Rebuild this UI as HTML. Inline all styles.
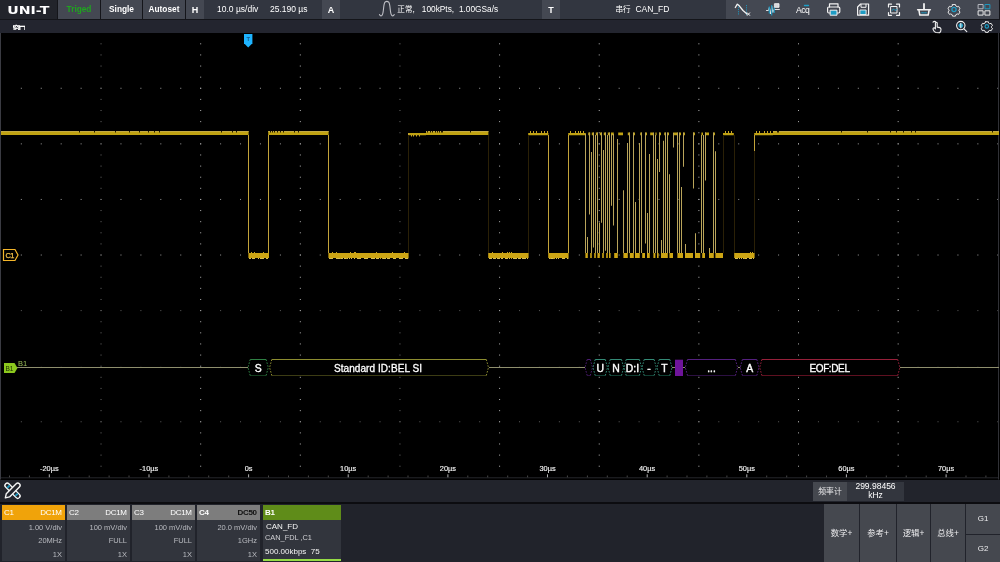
<!DOCTYPE html>
<html lang="zh">
<head>
<meta charset="utf-8">
<title>UNI-T Oscilloscope - CAN_FD decode</title>
<style>
*{box-sizing:border-box;margin:0;padding:0}
html,body{width:1000px;height:562px;overflow:hidden;background:#000}
body{font-family:"Liberation Sans","Noto Sans CJK SC",sans-serif;color:#fff;font-size:8.5px;position:relative}
.abs{position:absolute}
body>*{will-change:transform}
#top{left:0;top:0;width:1000px;height:20px;background:#14151a}
#top .b{position:absolute;top:0;height:18.8px;background:#444852;text-align:center;line-height:18.4px;font-weight:bold;font-size:8.3px;white-space:nowrap}
#top .f{position:absolute;top:0;height:18.8px;background:#323640;line-height:19.4px;font-size:8.5px;white-space:nowrap}
#logo{position:absolute;left:0;top:0;width:57px;height:18.8px;background:#22242b}
#bar2{left:0;top:19.8px;width:1000px;height:13.2px;background:#23252f}
#plot{left:0;top:0;width:1000px;height:562px}
#pan{left:0;top:479.5px;width:1000px;height:22.5px;background:#22242c}
#bot{left:0;top:502px;width:1000px;height:60px;background:#21232b;border-top:2.5px solid #0c0c10}
.ch{position:absolute;top:505px;width:63px;height:56px;background:#32353d}
.ch .h{position:absolute;left:0;top:0;width:100%;height:15px;font-size:8px;line-height:15.4px;color:#fff;letter-spacing:-.35px}
.ch .h span{position:absolute;right:3.4px;top:0}
.ch .h b{position:absolute;left:2px;top:0;font-weight:normal}
.ch .r{position:absolute;right:3px;font-size:7.5px;color:#b9bbc0;line-height:10px;white-space:nowrap}
.btn{position:absolute;background:#45484f;color:#ececee;font-size:8.4px;text-align:center;white-space:nowrap}
svg text{font-family:"Liberation Sans","Noto Sans CJK SC",sans-serif}
</style>
</head>
<body>
<svg id="plot" class="abs" width="1000" height="562" viewBox="0 0 1000 562"><rect x="0" y="33" width="1000" height="446.5" fill="#000"/><rect x="0" y="33" width="1" height="446.500" fill="#3a3b42"/><rect x="998" y="33" width="1" height="446.500" fill="#303136"/><rect x="1" y="477.300" width="997" height="1" fill="#26272c"/><g stroke="#9c9c9c" stroke-width="1" fill="none"><line x1="20.83" y1="88.28" x2="998" y2="88.28" stroke-dasharray="1 18.928"/><line x1="20.83" y1="143.86" x2="998" y2="143.86" stroke-dasharray="1 18.928"/><line x1="20.83" y1="199.44" x2="998" y2="199.44" stroke-dasharray="1 18.928"/><line x1="20.83" y1="255.02" x2="998" y2="255.02" stroke-dasharray="1 18.928"/><line x1="20.83" y1="310.60" x2="998" y2="310.60" stroke-dasharray="1 18.928" stroke="#5c5c5c"/><line x1="20.83" y1="367.40" x2="998" y2="367.40" stroke-dasharray="1 18.928"/><line x1="20.83" y1="421.76" x2="998" y2="421.76" stroke-dasharray="1 18.928" stroke="#5c5c5c"/><line x1="101.04" y1="43.32" x2="101.04" y2="476" stroke-dasharray="1 10.116" stroke="#6a6a6a"/><line x1="200.68" y1="43.32" x2="200.68" y2="476" stroke-dasharray="1 10.116" stroke="#b4b4b4"/><line x1="300.32" y1="43.32" x2="300.32" y2="476" stroke-dasharray="1 10.116" stroke="#b4b4b4"/><line x1="399.96" y1="43.32" x2="399.96" y2="476" stroke-dasharray="1 10.116" stroke="#6a6a6a"/><line x1="499.60" y1="43.32" x2="499.60" y2="476" stroke-dasharray="1 10.116" stroke="#b4b4b4"/><line x1="599.24" y1="43.32" x2="599.24" y2="476" stroke-dasharray="1 10.116" stroke="#b4b4b4"/><line x1="698.88" y1="43.32" x2="698.88" y2="476" stroke-dasharray="1 10.116" stroke="#b4b4b4"/><line x1="798.52" y1="43.32" x2="798.52" y2="476" stroke-dasharray="1 10.116" stroke="#b4b4b4"/><line x1="898.16" y1="43.32" x2="898.16" y2="476" stroke-dasharray="1 10.116" stroke="#b4b4b4"/></g><g fill="#474747"><rect x="9.0" y="475.5" width="1" height="1.8"/><rect x="28.9" y="475.5" width="1" height="1.8"/><rect x="48.8" y="474.3" width="1" height="3" fill="#b0b0b0"/><rect x="68.7" y="475.5" width="1" height="1.8"/><rect x="88.7" y="475.5" width="1" height="1.8"/><rect x="108.6" y="475.5" width="1" height="1.8"/><rect x="128.5" y="475.5" width="1" height="1.8"/><rect x="148.5" y="474.3" width="1" height="3" fill="#b0b0b0"/><rect x="168.4" y="475.5" width="1" height="1.8"/><rect x="188.3" y="475.5" width="1" height="1.8"/><rect x="208.2" y="475.5" width="1" height="1.8"/><rect x="228.2" y="475.5" width="1" height="1.8"/><rect x="248.1" y="474.3" width="1" height="3" fill="#b0b0b0"/><rect x="268.0" y="475.5" width="1" height="1.8"/><rect x="288.0" y="475.5" width="1" height="1.8"/><rect x="307.9" y="475.5" width="1" height="1.8"/><rect x="327.8" y="475.5" width="1" height="1.8"/><rect x="347.7" y="474.3" width="1" height="3" fill="#b0b0b0"/><rect x="367.7" y="475.5" width="1" height="1.8"/><rect x="387.6" y="475.5" width="1" height="1.8"/><rect x="407.5" y="475.5" width="1" height="1.8"/><rect x="427.5" y="475.5" width="1" height="1.8"/><rect x="447.4" y="474.3" width="1" height="3" fill="#b0b0b0"/><rect x="467.3" y="475.5" width="1" height="1.8"/><rect x="487.2" y="475.5" width="1" height="1.8"/><rect x="507.2" y="475.5" width="1" height="1.8"/><rect x="527.1" y="475.5" width="1" height="1.8"/><rect x="547.0" y="474.3" width="1" height="3" fill="#b0b0b0"/><rect x="566.9" y="475.5" width="1" height="1.8"/><rect x="586.9" y="475.5" width="1" height="1.8"/><rect x="606.8" y="475.5" width="1" height="1.8"/><rect x="626.7" y="475.5" width="1" height="1.8"/><rect x="646.7" y="474.3" width="1" height="3" fill="#b0b0b0"/><rect x="666.6" y="475.5" width="1" height="1.8"/><rect x="686.5" y="475.5" width="1" height="1.8"/><rect x="706.4" y="475.5" width="1" height="1.8"/><rect x="726.4" y="475.5" width="1" height="1.8"/><rect x="746.3" y="474.3" width="1" height="3" fill="#b0b0b0"/><rect x="766.2" y="475.5" width="1" height="1.8"/><rect x="786.2" y="475.5" width="1" height="1.8"/><rect x="806.1" y="475.5" width="1" height="1.8"/><rect x="826.0" y="475.5" width="1" height="1.8"/><rect x="845.9" y="474.3" width="1" height="3" fill="#b0b0b0"/><rect x="865.9" y="475.5" width="1" height="1.8"/><rect x="885.8" y="475.5" width="1" height="1.8"/><rect x="905.7" y="475.5" width="1" height="1.8"/><rect x="925.7" y="475.5" width="1" height="1.8"/><rect x="945.6" y="474.3" width="1" height="3" fill="#b0b0b0"/><rect x="965.5" y="475.5" width="1" height="1.8"/><rect x="985.4" y="475.5" width="1" height="1.8"/></g><g font-size="7.4" fill="#f2f2f2" stroke="#f2f2f2" stroke-width=".15" text-anchor="middle"><text x="49.3" y="471.300">-20µs</text><text x="148.9" y="471.300">-10µs</text><text x="248.6" y="471.300">0s</text><text x="348.2" y="471.300">10µs</text><text x="447.9" y="471.300">20µs</text><text x="547.5" y="471.300">30µs</text><text x="647.1" y="471.300">40µs</text><text x="746.8" y="471.300">50µs</text><text x="846.4" y="471.300">60µs</text><text x="946.1" y="471.300">70µs</text></g><path fill="#c0a212" d="M1 131h247.6v4h-247.6zM268.2 131h60.4v4h-60.4zM426 131h62.4v4h-62.4zM773 131h226v4h-226zM408.2 133h17.8v2.2h-17.8zM528.2 133h20.2v2.2h-20.2zM568.2 133h17.6v2.2h-17.6zM754.2 133h18.8v2.2h-18.8zM723 133h10.8v2.2h-10.8zM588.2 132.6h2v2.6h-2zM591.8 132.6h2v2.6h-2zM595.8 132.6h2v2.6h-2zM599.8 132.6h2v2.6h-2zM603.8 132.6h2v2.6h-2zM607.8 132.6h2v2.6h-2zM611 132.6h2.8v2.6h-2.8zM618.2 132.6h4.8v2.6h-4.8zM627.8 132.6h2v2.6h-2zM633.4 132.6h1.6v2.6h-1.6zM640.2 132.6h1.6v2.6h-1.6zM645.4 132.6h1.6v2.6h-1.6zM650.2 132.6h3.2v2.6h-3.2zM655.4 132.6h1.2v2.6h-1.2zM659 132.6h2v2.6h-2zM664.2 132.6h1.6v2.6h-1.6zM667.4 132.6h1.6v2.6h-1.6zM673 132.6h4.8v2.6h-4.8zM679.4 132.6h1.6v2.6h-1.6zM683.4 132.6h1.6v2.6h-1.6zM693 132.6h2v2.6h-2zM701.4 132.6h1.6v2.6h-1.6zM705 132.6h4v2.6h-4zM713.4 132.6h1.6v2.6h-1.6z"/><path fill="#c4aa44" d="M1 131h247.6v1h-247.6zM268.2 131h60.4v1h-60.4zM426 131h62.4v1h-62.4zM773 131h226v1h-226z"/><path fill="#cda514" d="M248.4 253h20.6v5h-20.6zM328.4 253h80.2v5h-80.2zM488.2 253h40.4v5h-40.4zM548.2 253h20.4v5h-20.4zM585.4 253h2.4v5h-2.4zM590.2 253h1.6v5h-1.6zM594.2 253h1.6v5h-1.6zM597.4 253h2.4v5h-2.4zM602.2 253h1.6v5h-1.6zM606.2 253h1.6v5h-1.6zM609 253h1.6v5h-1.6zM614.2 253h3.6v5h-3.6zM623.4 253h4.4v5h-4.4zM629.8 253h4v5h-4zM635 253h4.8v5h-4.8zM642.2 253h2.8v5h-2.8zM647 253h2.8v5h-2.8zM653.4 253h2v5h-2zM657 253h1.6v5h-1.6zM661 253h6.8v5h-6.8zM669.4 253h3.6v5h-3.6zM677.4 253h5.6v5h-5.6zM685 253h8v5h-8zM695 253h5.2v5h-5.2zM702.2 253h2.8v5h-2.8zM709 253h4.8v5h-4.8zM715.4 253h7.6v5h-7.6zM734.2 253h20.4v5h-20.4z"/><path fill="#d9c054" d="M249 258h2v1h-2zM252 258h3v1h-3zM258 258h1v1h-1zM260 258h4v1h-4zM266 258h2v1h-2zM329 258h4v1h-4zM336 258h4v1h-4zM341 258h2v1h-2zM344 258h4v1h-4zM349 258h1v1h-1zM351 258h1v1h-1zM354 258h1v1h-1zM357 258h4v1h-4zM364 258h4v1h-4zM371 258h4v1h-4zM376 258h3v1h-3zM380 258h1v1h-1zM382 258h4v1h-4zM387 258h3v1h-3zM393 258h3v1h-3zM399 258h4v1h-4zM405 258h3.2v1h-3.2zM489 258h3v1h-3zM493 258h3v1h-3zM497 258h3v1h-3zM501 258h2v1h-2zM505 258h3v1h-3zM509 258h1v1h-1zM513 258h4v1h-4zM518 258h3v1h-3zM522 258h4v1h-4zM527 258h1v1h-1zM549 258h4v1h-4zM556 258h1v1h-1zM558 258h1v1h-1zM562 258h3v1h-3zM567 258h1.4v1h-1.4zM735 258h3v1h-3zM739 258h1v1h-1zM741 258h1v1h-1zM743 258h4v1h-4zM749 258h3v1h-3zM753 258h1v1h-1z"/><path fill="#c2a33a" d="M408 133h1v8h-1zM248 135h1v118h-1zM268 135h1v118h-1zM328 135h1v118h-1zM548 135h1v118h-1zM568 135h1v118h-1zM754 135h1v16h-1z"/><path fill="#2a2006" d="M408 135h1v118h-1zM488 135h1v118h-1zM528 135h1v118h-1zM723 135h1v118h-1zM734 135h1v118h-1zM754 151h1v102h-1z"/><path fill="#b9a45a" d="M585 134h1v119h-1zM587 237h1v16h-1zM589 132.6h1v82h-1zM591 152h1v101h-1zM593 132.6h1v115h-1zM595 135h1v118h-1zM597 132.6h1v120.4h-1zM599 222.4h1v30.6h-1zM601 132.6h1v90.2h-1zM603 150h1v103h-1zM605 132.6h1v118.2h-1zM607 135h1v118h-1zM609 132.6h1v120.4h-1zM611 134h1v71.8h-1zM613 134h1v91.6h-1zM617 139h1v114h-1zM623 190.2h1v62.8h-1zM627 143h1v110h-1zM629 132.6h1v120.4h-1zM633 132.6h1v120.4h-1zM635 202h1v51h-1zM639 143h1v110h-1zM641 132.6h1v120.4h-1zM645 132.6h1v111h-1zM647 213h1v40h-1zM649 154h1v99h-1zM653 132.6h1v120.4h-1zM655 135h1v118h-1zM657 159h1v94h-1zM659 132.6h1v39.4h-1zM661 240h1v13h-1zM663 140.8h1v112.2h-1zM665 132.6h1v120.4h-1zM667 132.6h1v120.4h-1zM669 174.2h1v78.8h-1zM673 133h1v14.6h-1zM677 132.6h1v120.4h-1zM679 132.6h1v120.4h-1zM681 187h1v66h-1zM683 132.6h1v34.2h-1zM685 244h1v9h-1zM693 132.6h1v56h-1zM695 233.2h1v19.8h-1zM701 135h1v118h-1zM703 135h1v118h-1zM705 132.6h1v48h-1zM709 248h1v5h-1zM713 132.6h1v120.4h-1zM715 151.2h1v101.8h-1z"/><path fill="#241b00" d="M79 131h1v1.5h-1zM236 131h1v1.5h-1zM221 131h1v1.5h-1zM94 131h1v1.5h-1zM115 131h1v1.5h-1zM129 131h1v1.5h-1zM159 131h1v1.5h-1zM148 131h1v1.5h-1zM139 131h1v1.5h-1zM154 131h1v1.5h-1zM232 131h1v1.5h-1zM298 131h1v1.5h-1zM294 131h1v1.5h-1zM470 131h1v1.5h-1zM441 131h1v1.5h-1zM841 131h1v1.5h-1zM992 131h1v1.5h-1zM890 131h1v1.5h-1zM896 131h1v1.5h-1zM777 131h1v1.5h-1zM867 131h1v1.5h-1zM903 131h1v1.5h-1zM778 131h1v1.5h-1zM911 131h1v1.5h-1zM915 131h1v1.5h-1zM270 131h1v1.4h-1zM272 131h1v1.4h-1zM274 131h1v1.4h-1zM277 131h1v1.4h-1zM280 131h1v1.4h-1zM283 131h1v1.4h-1zM427 131h1v1.4h-1zM430 131h1v1.4h-1zM432 131h1v1.4h-1zM435 131h1v1.4h-1zM437 131h1v1.4h-1zM439 131h1v1.4h-1zM442 131h1v1.4h-1z"/><path fill="#c9a526" d="M263 252h1v1h-1zM254 252h1v1h-1zM251 252h1v1h-1zM404 252h1v1h-1zM340 258h1v1h-1zM380 258h1v1h-1zM355 252h1v1h-1zM380 258h1v1h-1zM376 252h1v1h-1zM382 258h1v1h-1zM392 252h1v1h-1zM336 252h1v1h-1zM346 258h1v1h-1zM350 252h1v1h-1zM332 252h1v1h-1zM354 252h1v1h-1zM511 252h1v1h-1zM502 252h1v1h-1zM492 252h1v1h-1zM511 258h1v1h-1zM509 252h1v1h-1zM507 252h1v1h-1zM554 258h1v1h-1zM550 258h1v1h-1zM553 258h1v1h-1zM750 252h1v1h-1zM744 258h1v1h-1zM752 252h1v1h-1zM411 135h1v1.6h-1zM413 135h1v1.6h-1zM416 135h1v1.6h-1zM419 135h1v1.6h-1zM530 131h1v2.2h-1zM533 131h1v2.2h-1zM536 131h1v2.2h-1zM541 131h1v2.2h-1zM544 131h1v2.2h-1zM547 131h1v2.2h-1zM570 131h1v2.2h-1zM575 131h1v2.2h-1zM578 131h1v2.2h-1zM580 131h1v2.2h-1zM583 131h1v2.2h-1zM756 131h1v2.2h-1zM759 131h1v2.2h-1zM764 131h1v2.2h-1zM767 131h1v2.2h-1zM770 131h1v2.2h-1zM725 131h1v2.2h-1zM728 131h1v2.2h-1zM731 131h1v2.2h-1z"/><path d="M3.5 249.5h11.5l3 5.5l-3 5.5h-11.5z" fill="#000" stroke="#f5b62a" stroke-width="1.2"/><text x="5.400" y="257.900" font-size="7.4" fill="#f5c24a" stroke="#f5c24a" stroke-width=".25" letter-spacing="-.4">C1</text><path d="M244 34h8.400v9.200l-4.200 4.200l-4.200-4.200z" fill="#1eb4ff"/><text x="248.200" y="41" font-size="5.800" font-weight="bold" fill="#1a5a8a" text-anchor="middle">T</text><path d="M17 367.5H248M489 367.5H585M672 367.5H685M738 367.5H741M900 367.5H999" stroke="#8f8f6e" stroke-width="1" fill="none"/><path d="M4 363h10.5l3 5l-3 5h-10.5z" fill="#8cc81e"/><text x="5.5" y="371" font-size="6.5" fill="#1a2a00">B1</text><text x="18" y="366" font-size="7.5" fill="#9cbf5a">B1</text><path d="M248.0 367.5L250.2 359.5H266.1L268.3 367.5L266.1 375.5H250.2z" fill="#000"/><path d="M250.2 359.5H266.1" stroke="#2f8044" stroke-width="1"/><path d="M250.2 375.5H266.1" stroke="#143c1e" stroke-width="1"/><path d="M250.2 359.5L248.0 367.5L250.2 375.5M266.1 359.5L268.3 367.5L266.1 375.5" stroke="#2f8044" stroke-width="1" stroke-dasharray="1.6 1.4" fill="none"/><path d="M269.6 367.5L271.8 359.5H486.3L488.5 367.5L486.3 375.5H271.8z" fill="#000"/><path d="M271.8 359.5H486.3" stroke="#8c8c30" stroke-width="1"/><path d="M271.8 375.5H486.3" stroke="#3c3c14" stroke-width="1"/><path d="M271.8 359.5L269.6 367.5L271.8 375.5M486.3 359.5L488.5 367.5L486.3 375.5" stroke="#8c8c30" stroke-width="1" stroke-dasharray="1.6 1.4" fill="none"/><path d="M585.0 367.5L587.2 359.5H590.3L592.5 367.5L590.3 375.5H587.2z" fill="#000"/><path d="M587.2 359.5H590.3" stroke="#4c1c70" stroke-width="1"/><path d="M587.2 375.5H590.3" stroke="#2c1042" stroke-width="1"/><path d="M587.2 359.5L585.0 367.5L587.2 375.5M590.3 359.5L592.5 367.5L590.3 375.5" stroke="#4c1c70" stroke-width="1" stroke-dasharray="1.6 1.4" fill="none"/><path d="M593.0 367.5L595.2 359.5H605.3L607.5 367.5L605.3 375.5H595.2z" fill="#000"/><path d="M595.2 359.5H605.3" stroke="#348a76" stroke-width="1"/><path d="M595.2 375.5H605.3" stroke="#103e32" stroke-width="1"/><path d="M595.2 359.5L593.0 367.5L595.2 375.5M605.3 359.5L607.5 367.5L605.3 375.5" stroke="#348a76" stroke-width="1" stroke-dasharray="1.6 1.4" fill="none"/><path d="M608.0 367.5L610.2 359.5H621.5L623.7 367.5L621.5 375.5H610.2z" fill="#000"/><path d="M610.2 359.5H621.5" stroke="#348a76" stroke-width="1"/><path d="M610.2 375.5H621.5" stroke="#103e32" stroke-width="1"/><path d="M610.2 359.5L608.0 367.5L610.2 375.5M621.5 359.5L623.7 367.5L621.5 375.5" stroke="#348a76" stroke-width="1" stroke-dasharray="1.6 1.4" fill="none"/><path d="M624.0 367.5L626.2 359.5H639.4L641.6 367.5L639.4 375.5H626.2z" fill="#000"/><path d="M626.2 359.5H639.4" stroke="#348a76" stroke-width="1"/><path d="M626.2 375.5H639.4" stroke="#103e32" stroke-width="1"/><path d="M626.2 359.5L624.0 367.5L626.2 375.5M639.4 359.5L641.6 367.5L639.4 375.5" stroke="#348a76" stroke-width="1" stroke-dasharray="1.6 1.4" fill="none"/><path d="M642.0 367.5L644.2 359.5H654.1L656.3 367.5L654.1 375.5H644.2z" fill="#000"/><path d="M644.2 359.5H654.1" stroke="#348a76" stroke-width="1"/><path d="M644.2 375.5H654.1" stroke="#103e32" stroke-width="1"/><path d="M644.2 359.5L642.0 367.5L644.2 375.5M654.1 359.5L656.3 367.5L654.1 375.5" stroke="#348a76" stroke-width="1" stroke-dasharray="1.6 1.4" fill="none"/><path d="M657.0 367.5L659.2 359.5H669.8L672.0 367.5L669.8 375.5H659.2z" fill="#000"/><path d="M659.2 359.5H669.8" stroke="#348a76" stroke-width="1"/><path d="M659.2 375.5H669.8" stroke="#103e32" stroke-width="1"/><path d="M659.2 359.5L657.0 367.5L659.2 375.5M669.8 359.5L672.0 367.5L669.8 375.5" stroke="#348a76" stroke-width="1" stroke-dasharray="1.6 1.4" fill="none"/><rect x="675" y="359.7" width="8" height="16.3" fill="#6e149a"/><path d="M685.3 367.5L687.5 359.5H735.4L737.6 367.5L735.4 375.5H687.5z" fill="#000"/><path d="M687.5 359.5H735.4" stroke="#54207e" stroke-width="1"/><path d="M687.5 375.5H735.4" stroke="#2c1042" stroke-width="1"/><path d="M687.5 359.5L685.3 367.5L687.5 375.5M735.4 359.5L737.6 367.5L735.4 375.5" stroke="#54207e" stroke-width="1" stroke-dasharray="1.6 1.4" fill="none"/><path d="M740.2 367.5L742.4 359.5H756.8L759.0 367.5L756.8 375.5H742.4z" fill="#000"/><path d="M742.4 359.5H756.8" stroke="#54207e" stroke-width="1"/><path d="M742.4 375.5H756.8" stroke="#2c1042" stroke-width="1"/><path d="M742.4 359.5L740.2 367.5L742.4 375.5M756.8 359.5L759.0 367.5L756.8 375.5" stroke="#54207e" stroke-width="1" stroke-dasharray="1.6 1.4" fill="none"/><path d="M759.7 367.5L761.9 359.5H897.7L899.9 367.5L897.7 375.5H761.9z" fill="#000"/><path d="M761.9 359.5H897.7" stroke="#96203a" stroke-width="1"/><path d="M761.9 375.5H897.7" stroke="#5e1020" stroke-width="1"/><path d="M761.9 359.5L759.7 367.5L761.9 375.5M897.7 359.5L899.9 367.5L897.7 375.5" stroke="#96203a" stroke-width="1" stroke-dasharray="1.6 1.4" fill="none"/><g font-size="10.4" fill="#fff" text-anchor="middle" stroke="#fff" stroke-width=".4"><text x="258.2" y="371.6">S</text><text x="600.3" y="371.6">U</text><text x="616.0" y="371.6">N</text><text x="632.5" y="371.6">D:I</text><text x="649.0" y="371.6">-</text><text x="664.5" y="371.6">T</text><text x="749.6" y="371.6">A</text></g><text x="378" y="371.6" font-size="10" fill="#fff" stroke="#fff" stroke-width=".3" text-anchor="middle" textLength="88" lengthAdjust="spacing">Standard ID:BEL SI</text><text x="711.5" y="371.6" font-size="10" fill="#fff" text-anchor="middle" stroke="#fff" stroke-width=".4">...</text><text x="829.7" y="371.6" font-size="10" fill="#fff" stroke="#fff" stroke-width=".3" text-anchor="middle" textLength="40.5" lengthAdjust="spacing">EOF:DEL</text></svg>
<div id="top" class="abs">
  <div id="logo"><svg width="57" height="18" viewBox="0 0 57 18"><text x="7.3" y="14.4" font-size="10" font-weight="bold" fill="#fff" textLength="42" lengthAdjust="spacingAndGlyphs" style="font-family:'DejaVu Sans','Liberation Sans',sans-serif">UNI-T</text></svg></div>
  <div class="b" style="left:58px;width:42px;color:#1fa51f">Triged</div>
  <div class="b" style="left:101px;width:41px">Single</div>
  <div class="b" style="left:143px;width:42px">Autoset</div>
  <div class="b" style="left:186px;width:18px;font-size:9px;line-height:20.2px">H</div>
  <div class="f" style="left:204px;width:118px"><span class="abs" style="left:13px">10.0 µs/div</span><span class="abs" style="left:66px">25.190 µs</span></div>
  <div class="b" style="left:322px;width:18px;font-size:9px;line-height:20.2px">A</div>
  <div class="f" style="left:340px;width:202px"><span class="abs" style="left:57.3px"><span style="font-size:7.6px">正常</span>,</span><span class="abs" style="left:81.8px;font-size:8.3px">100kPts,</span><span class="abs" style="left:118.9px;font-size:8.3px">1.00GSa/s</span></div>
  <svg class="abs" style="left:378px;top:0" width="18" height="18" viewBox="378 0 18 18" fill="none" stroke="#bfc0c6" stroke-width="1.100" stroke-linecap="round"><path d="M379.500 14.500q1 2 2.300 1q1.200-1 1.700-6.500t1.500-6.800q1.900-1.700 3.700 0q1 1.300 1.500 6.800t1.700 6.500q1.300 1 2.300-1"/></svg>
  <div class="b" style="left:542px;width:18px;font-size:9px;line-height:20.2px">T</div>
  <div class="f" style="left:560px;width:166px"><span class="abs" style="left:55.5px"><span style="font-size:7.6px">串行</span>&nbsp; CAN_FD</span></div>
  <div class="b" style="left:726px;width:273px"></div><svg class="abs" style="left:726px;top:0" width="274" height="19" viewBox="726 0 274 19" fill="none" stroke="#f2f2f2" stroke-width="1.2" stroke-linecap="round" stroke-linejoin="round">
<g><path d="M738.500 4.500v11M746.500 5v10.500" stroke="#1e96be" stroke-dasharray="1.2 1" stroke-width=".9" stroke-linecap="butt"/><path d="M735.300 7.500l2-3.300l2 1.600l3.700 4.700l4 3.500" stroke-width="1.300"/><path d="M747.300 12.800l2.400 2.600M749.700 12.800l-2.400 2.600" stroke-width="1"/></g>
<g><path d="M766.500 10.500h2l.8-3l1.200 6.500l1.200-8l1.200 6.500l1-3h5.500" stroke-width=".9"/><path d="M769.300 6.500v7M771.700 5v10.500M774.200 7v6" stroke="#1e96be" stroke-width="1.200" stroke-linecap="butt"/><path d="M774.800 3.700h4.200v3.600h-4.200z" stroke-width=".9" fill="#d8d8dc"/></g>
<g><path d="M804.500 5.500h4" stroke="#1e9cc4" stroke-width="1.300"/></g>
<g><path d="M829.500 7v-3.200h8.500v3.200"/><rect x="827.600" y="7" width="12.200" height="6" rx="1.200"/><rect x="830.500" y="10.200" width="6.500" height="5" fill="#1e9cc4" stroke="#f2f2f2" stroke-width="1"/></g>
<g><path d="M857.600 7l3-3h8v11.200h-11z"/><path d="M861 4.300v3h5v-3" stroke-width="1"/><rect x="860.300" y="10" width="5.800" height="4.500" fill="#1e9cc4" stroke="#f2f2f2" stroke-width=".9"/></g>
<g><path d="M888.500 7v-2.800h3M896.500 4.200h3v2.800M899.500 12.500v2.800h-3M891.500 15.300h-3v-2.800"/><rect x="891" y="6.500" width="6" height="6.500" stroke-width="1"/><path d="M892 10.500l1.500-1.500l1.500 1.500l1.500-1" stroke="#1e9cc4" stroke-width="1"/></g>
<g stroke-width="1.500"><path d="M924 4v5.200" stroke-width="1.800"/><path d="M917.600 9.700h12.800"/><path d="M919 10.500l.8 4.600h8.400l.8-4.600"/><path d="M921.500 12.700h5" stroke="#1e9cc4" stroke-width="1.600" stroke-linecap="butt" stroke-dasharray="1.200 .7"/></g>
<g transform="translate(954 9.500) scale(.84) translate(-954 -9.500)"><path d="M952.300 3.600h3.400l.5 1.700l1.600.9l1.700-.5l1.700 2.900l-1.300 1.200v1.400l1.300 1.200l-1.700 2.900l-1.700-.5l-1.600.9l-.5 1.700h-3.400l-.5-1.700l-1.600-.9l-1.700.5l-1.700-2.900l1.300-1.200v-1.400l-1.300-1.200l1.700-2.900l1.700.5l1.600-.9z" stroke-width="1.100"/><circle cx="954" cy="9.500" r="2.500" stroke="#1e9cc4" stroke-width="1.500"/></g>
<g stroke-width=".95"><rect x="978.500" y="4.500" width="4.600" height="4.300" stroke="#b9bcc4"/><rect x="985.300" y="4.500" width="4.600" height="4.300" stroke="#1e9cc4"/><rect x="978.500" y="10.800" width="4.600" height="4.300"/><rect x="985.300" y="10.800" width="4.600" height="4.300"/></g>
</svg>
<div class="abs" style="left:796px;top:4.500px;font-size:8.6px;line-height:11px;letter-spacing:-.5px;color:#fff">Acq</div>
</div>
<div id="bar2" class="abs"><div class="abs" style="left:12.5px;top:3.9px;height:6.5px;overflow:hidden;font-size:7.8px;line-height:11.6px;font-weight:900;letter-spacing:-1.8px">窗口</div></div>
<svg class="abs" style="left:920px;top:19px" width="80" height="15" viewBox="920 19 80 15" fill="none" stroke="#f2f2f2" stroke-width="1.100" stroke-linecap="round" stroke-linejoin="round">
<path d="M933 22.200q1.500-1.600 3 0M936 32.500q-2-.3-2.800-2.800q-.7-2 1.200-1.800l1 1v-6q.9-1.400 1.800 0v4.200q3.800.2 3.800 2.300q0 2.300-1.500 3.300z"/>
<circle cx="960.800" cy="25.600" r="4.200"/><path d="M964 28.800l2.800 2.800"/><circle cx="960.800" cy="25.600" r="2.400" fill="#1e9cc4" stroke="none"/><path d="M960.800 23.300v4.600" stroke-width="1"/>
<g transform="translate(986.800 26.400) scale(.9) translate(-986.800 -26.400)"><path d="M985.300 21.200h3l.4 1.400l1.400.8l1.500-.4l1.500 2.500l-1.100 1v1.200l1.100 1l-1.500 2.500l-1.500-.4l-1.400.8l-.4 1.400h-3l-.4-1.400l-1.400-.8l-1.500.4l-1.500-2.500l1.100-1v-1.200l-1.100-1l1.500-2.500l1.500.4l1.400-.8z" stroke-dasharray="2.200 .8"/><circle cx="986.800" cy="26.400" r="1.900" stroke="#1e9cc4" stroke-width="1.300"/></g>
</svg>
<div id="pan" class="abs">
  <div class="btn" style="left:813px;top:1.8px;width:34px;height:19px;line-height:19px;font-size:7.8px">频率计</div>
  <div class="btn" style="left:847px;top:1.8px;width:57px;height:19px;background:#33363e;font-size:8.5px;line-height:9.4px;color:#fff">299.98456<br>kHz</div>
</div>
<div id="bot" class="abs"></div>
<svg class="abs" style="left:3px;top:481px" width="20" height="20" viewBox="3 481 20 20" fill="none" stroke="#f4f4f4" stroke-width="1.400" stroke-linejoin="round"><g transform="rotate(-45 12.500 490.700)"><rect x="10.200" y="481" width="4.600" height="19.400" rx="2.200"/><path d="M10.800 485h3.400M10.800 496.400h3.400" stroke="#1e9cc4" stroke-width="1.800"/></g><g transform="rotate(45 12.500 490.700)"><path d="M10.200 483.200q0-2.200 2.300-2.200t2.300 2.200v14l-2.300 3.600l-2.300-3.600z" fill="#22242c"/></g></svg>
<div class="ch" style="left:2px"><div class="h" style="background:#f0a30a"><b>C1</b><span>DC1M</span></div><div class="r" style="top:17.8px">1.00 V/div</div><div class="r" style="top:31px">20MHz</div><div class="r" style="top:45px">1X</div></div>
<div class="ch" style="left:67px"><div class="h" style="background:#7d7d7d"><b>C2</b><span>DC1M</span></div><div class="r" style="top:17.8px">100 mV/div</div><div class="r" style="top:31px">FULL</div><div class="r" style="top:45px">1X</div></div>
<div class="ch" style="left:132px"><div class="h" style="background:#7d7d7d"><b>C3</b><span>DC1M</span></div><div class="r" style="top:17.8px">100 mV/div</div><div class="r" style="top:31px">FULL</div><div class="r" style="top:45px">1X</div></div>
<div class="ch" style="left:197px"><div class="h" style="background:#7d7d7d"><b style="font-weight:bold">C4</b><span style="color:#111;font-weight:bold">DC50</span></div><div class="r" style="top:17.8px">20.0 mV/div</div><div class="r" style="top:31px">1GHz</div><div class="r" style="top:45px">1X</div></div>
<div class="ch" style="left:263px;width:78px;height:54px"><div class="h" style="background:#5f8c19"><b style="font-weight:bold">B1</b></div>
  <div class="abs" style="left:3px;top:17px;font-size:8px;line-height:10px;color:#f4f4f4;white-space:nowrap">CAN_FD</div>
  <div class="abs" style="left:2px;top:28px;font-size:7.4px;line-height:10px;color:#d0d0d4;white-space:nowrap">CAN_FDL ,C1</div>
  <div class="abs" style="left:2px;top:41.5px;font-size:8px;line-height:10px;color:#f4f4f4;white-space:nowrap">500.00kbps&nbsp; 75</div>
</div>
<div class="abs" style="left:263px;top:559px;width:78px;height:2px;background:#96dc46"></div>
<div class="btn" style="left:824px;top:504px;width:35px;height:58px;line-height:58px">数学+</div>
<div class="btn" style="left:860px;top:504px;width:36px;height:58px;line-height:58px">参考+</div>
<div class="btn" style="left:897px;top:504px;width:33px;height:58px;line-height:58px">逻辑+</div>
<div class="btn" style="left:931px;top:504px;width:34px;height:58px;line-height:58px">总线+</div>
<div class="btn" style="left:966px;top:504px;width:34px;height:30px;line-height:30px;font-size:8px">G1</div>
<div class="btn" style="left:966px;top:535px;width:34px;height:27px;line-height:27px;font-size:8px">G2</div>
</body>
</html>
